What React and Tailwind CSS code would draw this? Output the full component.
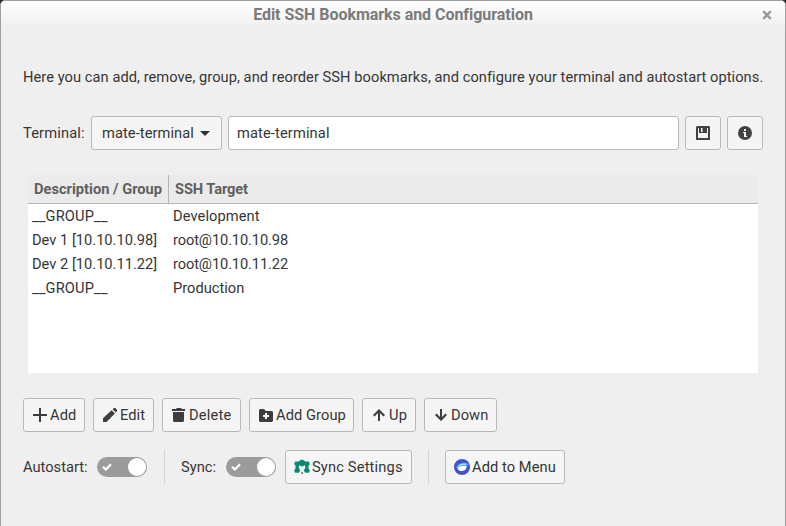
import React from "react";

function Icon({ children, className = "size-4" }) {
  return (
    <svg viewBox="0 0 16 16" className={`${className} shrink-0`} fill="currentColor">
      {children}
    </svg>
  );
}

function Button({ className, children }) {
  return (
    <button
      className={`flex h-[34px] shrink-0 items-center rounded-[3px] border border-[#b9b9b9] bg-[#f5f5f5] tracking-[0.07px] whitespace-nowrap ${className}`}
    >
      {children}
    </button>
  );
}

const CheckSwitch = () => (
  <div className="flex h-5 w-[50px] shrink-0 items-center justify-between rounded-full bg-[#9b9b9b] pr-px pl-[5px]">
    <svg viewBox="0 0 10 8" className="h-2 w-[10px]" fill="none" stroke="#fff" strokeWidth="2.1">
      <path d="M1 3.8 3.8 6.6 9 1.2" />
    </svg>
    <div className="size-[18px] rounded-full bg-white" />
  </div>
);

const Separator = ({ className }) => <div className={`h-[34px] w-px shrink-0 bg-[#d5d5d5] ${className}`} />;

const rows = [
  { name: "__GROUP__", target: "Development", nameSpacing: "tracking-[0.15px]", targetSpacing: "tracking-[0.08px]" },
  { name: "Dev 1 [10.10.10.98]", target: "root@10.10.10.98", nameSpacing: "tracking-normal", targetSpacing: "tracking-[-0.12px]" },
  { name: "Dev 2 [10.10.11.22]", target: "root@10.10.11.22", nameSpacing: "tracking-normal", targetSpacing: "tracking-[-0.12px]" },
  { name: "__GROUP__", target: "Production", nameSpacing: "tracking-[0.15px]", targetSpacing: "tracking-normal" },
];

export default function App() {
  return (
    <div className="h-[526px] w-[786px] overflow-hidden bg-[#2b2b2b] font-['Roboto',sans-serif] text-[14.667px] leading-5 text-[#363636]">
      <div className="flex h-[540px] w-full flex-col rounded-t-[5px] border border-[#a0a0a0] bg-[#efefef]">
        <header className="grid h-[27px] shrink-0 grid-cols-[28px_1fr_28px] items-center rounded-t-[4px] bg-linear-to-b from-white to-[#efefef]">
          <span />
          <h1 className="text-center text-[16px] font-bold tracking-[-0.04px] text-[#7b7b7b]">
            Edit SSH Bookmarks and Configuration
          </h1>
          <svg viewBox="0 0 10 10" className="ml-[5px] size-[10px]" fill="none" stroke="#999" strokeWidth="2.4">
            <path d="M1.2 1.2 8.8 8.8M8.8 1.2 1.2 8.8" />
          </svg>
        </header>

        <main className="flex flex-col px-[22px] pt-[39px]">
          <p className="h-5 tracking-[0.049px] whitespace-nowrap">
            Here you can add, remove, group, and reorder SSH bookmarks, and configure your terminal and autostart options.
          </p>

          <div className="mt-[29px] flex items-center gap-[6px]">
            <span className="w-[62px] tracking-[0.15px] whitespace-nowrap">Terminal:</span>
            <Button className="w-[131px] justify-between pr-[11px] pl-[10px]">
              mate-terminal
              <svg viewBox="0 0 10 5" className="h-[5px] w-[10px]" fill="#303030">
                <path d="M0 0h10L5 5z" />
              </svg>
            </Button>
            <div className="flex h-[34px] w-[451px] items-center rounded-[3px] border border-[#b9b9b9] bg-white pl-2 tracking-[0.12px]">
              mate-terminal
            </div>
            <Button className="w-9 justify-center text-[#424242]">
              <Icon>
                <path fillRule="evenodd" d="M2 1h12l1 1v13H1V2zM3 3v10h10V3h-1v5H4V3zM6 3v4h1.500V3z" />
              </Icon>
            </Button>
            <Button className="w-9 justify-center text-[#424242]">
              <Icon>
                <path fillRule="evenodd" d="M8 1a7 7 0 1 0 0 14A7 7 0 0 0 8 1M7 4h2v2H7zM6 7h3v4h1v1H7V8H6z" />
              </Icon>
            </Button>
          </div>

          <div className="mx-[5px] mt-[25px] h-[198px] bg-white">
            <div className="flex h-[29px] border-b border-[#b5b5b5] bg-[#ebebeb] font-bold text-[#606060]">
              <div className="flex w-[141px] items-center border-r border-[#b5b5b5] pl-[6px] whitespace-nowrap">
                Description / Group
              </div>
              <div className="flex items-center pl-[6px] tracking-[-0.1px]">SSH Target</div>
            </div>
            {rows.map(({ name, target, nameSpacing, targetSpacing }) => (
              <div key={name + target} className="flex h-6 items-center">
                <div className={`w-[141px] pl-1 whitespace-nowrap ${nameSpacing}`}>{name}</div>
                <div className={`pl-1 ${targetSpacing}`}>{target}</div>
              </div>
            ))}
          </div>

          <div className="mt-[25px] flex gap-2">
            <Button className="w-[62px] gap-[2px] pl-2">
              <Icon className="size-4 text-[#3d3d3d]">
                <path d="M7 1h2v6h6v2H9v6H7V9H1V7h6z" />
              </Icon>
              Add
            </Button>
            <Button className="w-[61px] gap-[2px] pl-2">
              <Icon className="size-4 text-[#3d3d3d]">
                <path d="M1 15v-3.7l8.6-8.1 3.3 3.3L4.5 15zM10.6 2.3 12 1h1.2L15 2.8V4l-1.2 1.5z" />
              </Icon>
              Edit
            </Button>
            <Button className="w-[79px] gap-[2px] pl-2">
              <Icon className="size-4 text-[#3d3d3d]">
                <path d="M1 2h4l1-1h4l1 1h3v2H1zM2 5h11v9l-1 1H3l-1-1z" />
              </Icon>
              <span className="tracking-[0.2px]">Delete</span>
            </Button>
            <Button className="w-[105px] gap-[2px] pl-2">
              <Icon className="size-4 text-[#3d3d3d]">
                <path fillRule="evenodd" d="M1 3l1-1h4l2 2h6l1 1v9l-1 1H2l-1-1zM7 6v2H5v2h2v2h2v-2h2V8H9V6z" />
              </Icon>
              Add Group
            </Button>
            <Button className="w-[54px] gap-[2px] pl-2">
              <Icon className="size-4 text-[#3d3d3d]">
                <path d="M8 2l6 6-1.5 1.4L9 5.9V14H7V5.9L3.5 9.4 2 8z" />
              </Icon>
              <span className="tracking-[0.2px]">Up</span>
            </Button>
            <Button className="w-[73px] gap-[2px] pl-2">
              <Icon className="size-4 text-[#3d3d3d]">
                <path d="M8 14 2 8l1.5-1.4L7 10.1V2h2v8.1l3.5-3.5L14 8z" />
              </Icon>
              Down
            </Button>
          </div>

          <div className="mt-[18px] flex items-center">
            <span className="w-[74px] whitespace-nowrap">Autostart:</span>
            <CheckSwitch />
            <Separator className="ml-[17px]" />
            <span className="ml-4 w-[45px]">Sync:</span>
            <CheckSwitch />
            <Button className="ml-[9px] w-[127px] gap-[2px] pl-2">
              <svg viewBox="0 0 16 16" className="size-4 shrink-0">
                <path d="M5.500 12.500A5 5 0 1 1 10.500 12.500" fill="none" stroke="#078975" strokeWidth="3.400" />
                <g fill="#078975">
                  <path d="M5.500 2Q8-1 10.500 2V6.500L8 7.500 5.500 6.500z" />
                  <rect x="0.500" y="2.600" width="4" height="4" rx="1.300" />
                  <rect x="11.500" y="2.600" width="4" height="4" rx="1.300" />
                  <rect x="0.500" y="9.800" width="4" height="4" rx="1.300" />
                  <rect x="11.500" y="9.800" width="4" height="4" rx="1.300" />
                </g>
                <path d="M7 12.800h2v1.500l-1 1-1-1z" fill="#969696" />
              </svg>
              <span className="tracking-[0.16px]">Sync Settings</span>
            </Button>
            <Separator className="ml-4" />
            <Button className="ml-4 w-[120px] gap-[2px] pl-2">
              <svg viewBox="0 0 16 16" className="size-4 shrink-0">
                <circle cx="8" cy="8" r="8" fill="#4453cd" />
                <ellipse cx="8" cy="8.300" rx="4.600" ry="3.700" transform="rotate(-15 8 8)" fill="#fff" />
                <path d="M1.800 9.300C2.800 5.700 6.200 4 10 3.700c2-.1 4 .5 4.400 1.500.2.800-.6 1.600-1.600 2.100C10.500 6 6.500 6.700 3.600 8.600z" fill="#47a9fa" />
                <path d="M4.800 7C7 5.200 9.500 4.800 12 5.300" fill="none" stroke="#e6f4ff" strokeWidth="1" />
              </svg>
              Add to Menu
            </Button>
          </div>
        </main>
      </div>
    </div>
  );
}
